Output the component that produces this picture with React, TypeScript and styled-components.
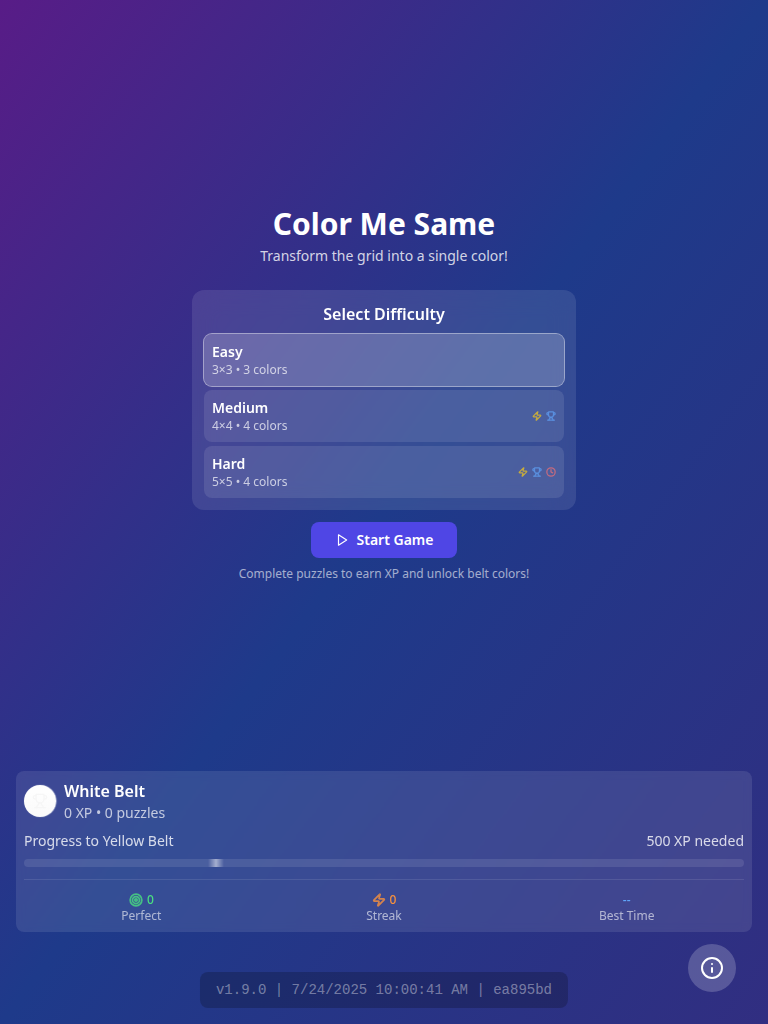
import React from "react";
import styled, { createGlobalStyle } from "styled-components";
import { Zap, Trophy, Clock, Target, Info } from "lucide-react";

const GlobalStyle = createGlobalStyle`
  *, *::before, *::after { box-sizing: border-box; }
  body { margin: 0; font-family: "Noto Sans", sans-serif; color: #fff; }
  h1, h2, p { margin: 0; }
  button { font: inherit; color: inherit; border: 0; cursor: pointer; }
`;

const Page = styled.div`
  position: relative;
  display: flex;
  flex-direction: column;
  height: 100vh;
  padding: 16px 16px 92px;
  background: linear-gradient(to bottom right, #581c87, #1e3a8a, #312e81);
`;

const Main = styled.main`
  flex: 1;
  display: flex;
  flex-direction: column;
  align-items: center;
  justify-content: center;
`;

const Title = styled.h1`
  font-size: 30px;
  line-height: 36px;
  font-weight: 700;
  margin-bottom: 4px;
`;

const Subtitle = styled.p`
  font-size: 14px;
  line-height: 20px;
  color: rgba(255, 255, 255, 0.8);
  margin-bottom: 24px;
`;

const Panel = styled.section`
  width: 384px;
  padding: 12px;
  border-radius: 12px;
  background: rgba(255, 255, 255, 0.1);
  backdrop-filter: blur(12px);
`;

const PanelTitle = styled.h2`
  font-size: 16px;
  line-height: 24px;
  font-weight: 600;
  text-align: center;
  margin-bottom: 8px;
`;

const Options = styled.div`
  display: flex;
  flex-direction: column;
  gap: 4px;
`;

const Option = styled.button<{ $selected?: boolean }>`
  display: flex;
  align-items: center;
  justify-content: space-between;
  padding: 8px;
  border-radius: 8px;
  text-align: left;
  background: rgba(255, 255, 255, ${(p) => (p.$selected ? 0.2 : 0.1)});
  box-shadow: ${(p) => (p.$selected ? "0 0 0 1px rgba(255, 255, 255, 0.5)" : "none")};
`;

const OptionName = styled.div`
  font-size: 14px;
  line-height: 20px;
  font-weight: 600;
`;

const OptionInfo = styled.div`
  font-size: 12px;
  line-height: 16px;
  color: rgba(255, 255, 255, 0.7);
`;

const Features = styled.div`
  display: flex;
  gap: 4px;
  opacity: 0.7;

  svg {
    stroke-width: 3;
  }
`;

const StartButton = styled.button`
  display: flex;
  align-items: center;
  gap: 8px;
  height: 36px;
  margin-top: 12px;
  padding: 0 24px;
  border-radius: 8px;
  background: #4f46e5;
  font-size: 14px;
  line-height: 20px;
  font-weight: 600;
`;

const Hint = styled.p`
  margin-top: 8px;
  font-size: 12px;
  line-height: 16px;
  color: rgba(255, 255, 255, 0.6);
`;

const Stats = styled.section`
  padding: 8px;
  border-radius: 8px;
  background: rgba(255, 255, 255, 0.1);
  backdrop-filter: blur(4px);
`;

const Belt = styled.div`
  display: flex;
  align-items: center;
  gap: 8px;
  margin-bottom: 8px;
`;

const BeltBadge = styled.div`
  display: flex;
  align-items: center;
  justify-content: center;
  width: 32px;
  height: 32px;
  border-radius: 50%;
  background: linear-gradient(to bottom, #fff, #fafafa);
  color: #f6f6f6;
  box-shadow: 0.5px 0 1px rgba(255, 255, 255, 0.8);
`;

const BeltName = styled.div`
  font-size: 16px;
  line-height: 24px;
  font-weight: 600;
`;

const BeltInfo = styled.div`
  font-size: 14px;
  line-height: 20px;
  color: rgba(255, 255, 255, 0.7);
`;

const ProgressText = styled.div`
  display: flex;
  justify-content: space-between;
  margin-bottom: 8px;
  font-size: 14px;
  line-height: 20px;
  color: rgba(255, 255, 255, 0.8);
`;

const Track = styled.div`
  height: 8px;
  padding-left: 184px;
  border-radius: 4px;
  background: rgba(255, 255, 255, 0.1);
  overflow: hidden;
`;

const Glint = styled.div`
  width: 16px;
  height: 8px;
  background: linear-gradient(to right, transparent, rgba(255, 255, 255, 0.5), transparent);
`;

const StatGrid = styled.div`
  display: grid;
  grid-template-columns: repeat(3, 1fr);
  gap: 8px;
  margin-top: 12px;
  padding-top: 12px;
  border-top: 1px solid rgba(255, 255, 255, 0.1);
  text-align: center;
  font-size: 12px;
  line-height: 16px;
`;

const StatValue = styled.div<{ $color: string }>`
  display: flex;
  align-items: center;
  justify-content: center;
  gap: 4px;
  height: 16px;
  font-weight: 500;
  color: ${(p) => p.$color};

  svg {
    stroke-width: 3;
    opacity: 0.8;
  }
`;

const StatLabel = styled.div`
  color: rgba(255, 255, 255, 0.6);
`;

const Version = styled.div`
  position: absolute;
  bottom: 16px;
  left: 50%;
  transform: translateX(-50%);
  padding: 8px 16px;
  border-radius: 8px;
  background: rgba(0, 0, 0, 0.2);
  color: rgba(255, 255, 255, 0.4);
  font: 14px/20px "Liberation Mono", monospace;
  white-space: nowrap;
`;

const InfoButton = styled.button`
  position: absolute;
  right: 32px;
  bottom: 32px;
  display: flex;
  align-items: center;
  justify-content: center;
  width: 48px;
  height: 48px;
  padding: 0;
  border-radius: 50%;
  background: rgba(255, 255, 255, 0.2);
`;

const PlayIcon = () => (
  <svg
    width="14"
    height="14"
    viewBox="0 0 24 24"
    fill="none"
    stroke="currentColor"
    strokeWidth="2"
    strokeLinecap="round"
    strokeLinejoin="round"
  >
    <polygon points="6 3 20 12 6 21 6 3" />
  </svg>
);

const levels = [
  { name: "Easy", info: "3×3 • 3 colors", power: false, trophy: false, timed: false },
  { name: "Medium", info: "4×4 • 4 colors", power: true, trophy: true, timed: false },
  { name: "Hard", info: "5×5 • 4 colors", power: true, trophy: true, timed: true },
];

export default function App() {
  return (
    <Page>
      <GlobalStyle />
      <Main>
        <Title>Color Me Same</Title>
        <Subtitle>Transform the grid into a single color!</Subtitle>
        <Panel>
          <PanelTitle>Select Difficulty</PanelTitle>
          <Options>
            {levels.map((l, i) => (
              <Option key={l.name} $selected={i === 0}>
                <div>
                  <OptionName>{l.name}</OptionName>
                  <OptionInfo>{l.info}</OptionInfo>
                </div>
                <Features>
                  {l.power && <Zap size={10} color="#facc15" />}
                  {l.trophy && <Trophy size={10} color="#60a5fa" />}
                  {l.timed && <Clock size={10} color="#f87171" />}
                </Features>
              </Option>
            ))}
          </Options>
        </Panel>
        <StartButton>
          <PlayIcon />
          Start Game
        </StartButton>
        <Hint>Complete puzzles to earn XP and unlock belt colors!</Hint>
      </Main>
      <Stats>
        <Belt>
          <BeltBadge>
            <Trophy size={16} />
          </BeltBadge>
          <div>
            <BeltName>White Belt</BeltName>
            <BeltInfo>0 XP • 0 puzzles</BeltInfo>
          </div>
        </Belt>
        <ProgressText>
          <span>Progress to Yellow Belt</span>
          <span>500 XP needed</span>
        </ProgressText>
        <Track>
          <Glint />
        </Track>
        <StatGrid>
          <div>
            <StatValue $color="#4ade80">
              <Target size={14} />0
            </StatValue>
            <StatLabel>Perfect</StatLabel>
          </div>
          <div>
            <StatValue $color="#fb923c">
              <Zap size={14} />0
            </StatValue>
            <StatLabel>Streak</StatLabel>
          </div>
          <div>
            <StatValue $color="#60a5fa">--</StatValue>
            <StatLabel>Best Time</StatLabel>
          </div>
        </StatGrid>
      </Stats>
      <Version>v1.9.0 | 7/24/2025 10:00:41 AM | ea895bd</Version>
      <InfoButton aria-label="Info">
        <Info size={24} />
      </InfoButton>
    </Page>
  );
}
